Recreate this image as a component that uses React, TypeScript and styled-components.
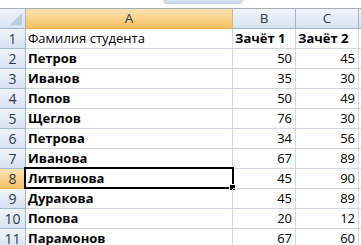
import React from "react";
import styled, { createGlobalStyle, css } from "styled-components";

const Global = createGlobalStyle`
  html, body { margin: 0; padding: 0; background: #fff; }
  body { font-family: "Open Sans", "Liberation Sans", Arial, sans-serif; overflow: hidden; }
`;

const Sheet = styled.div`
  width: 361px;
  height: 245px;
  overflow: hidden;
  background: #fff;
`;

const TopStrip = styled.div`
  height: 8px;
  border-bottom: 1px solid #a5acb5;
  background: #fff;
  display: flex;
  padding-left: 163px;
`;

const ScrollThumb = styled.div`
  width: 80px;
  height: 4px;
  background: linear-gradient(#d3e0f1, #bfd2ea);
  border-radius: 0 0 5px 5px;
`;

const Grid = styled.div`
  display: grid;
  grid-template-columns: 26px 207px 63px 63px 1fr;
  grid-auto-rows: 20px;
`;

const HeadCell = styled.div<{ $active?: boolean }>`
  box-sizing: border-box;
  border-right: 1px solid #9eb6ce;
  border-bottom: 1px solid #9eb6ce;
  background: linear-gradient(#f1f5fb, #e2eaf6 55%, #d6e2f2);
  color: #2a3a4e;
  font-size: 13.5px;
  display: flex;
  align-items: center;
  justify-content: center;
  padding-bottom: 2px;
  position: relative;
  ${(p) =>
    p.$active &&
    css`
      background: linear-gradient(#fbe3b3, #f9d38f 45%, #f5c064);
      border-right-color: #f2b24e;
      border-bottom-color: #f2b24e;
    `}
`;

const CornerTriangle = styled.div`
  position: absolute;
  right: 3px;
  bottom: 3px;
  width: 0;
  height: 0;
  border-left: 12px solid transparent;
  border-bottom: 12px solid #bccbdd;
`;

const RowHead = styled(HeadCell)`
  font-size: 14px;
  padding-bottom: 1px;
`;

const Cell = styled.div<{ $num?: boolean; $bold?: boolean }>`
  box-sizing: border-box;
  border-right: 1px solid #d0d7e5;
  border-bottom: 1px solid #d0d7e5;
  font-size: 13px;
  color: #000;
  display: flex;
  align-items: center;
  padding: 0 3px 2px 2px;
  white-space: nowrap;
  position: relative;
  justify-content: ${(p) => (p.$num ? "flex-end" : "flex-start")};
  font-weight: ${(p) => (p.$bold ? 700 : 400)};
`;

const ActiveFrame = styled.div`
  position: absolute;
  left: -2px;
  top: -2px;
  right: -2px;
  bottom: -1px;
  border: 2px solid #000;
  pointer-events: none;
  &::after {
    content: "";
    position: absolute;
    right: -4px;
    bottom: -4px;
    width: 5px;
    height: 5px;
    background: #000;
    border: 1px solid #fff;
  }
`;

const rows: [string, number, number][] = [
  ["Петров", 50, 45],
  ["Иванов", 35, 30],
  ["Попов", 50, 49],
  ["Щеглов", 76, 30],
  ["Петрова", 34, 56],
  ["Иванова", 67, 89],
  ["Литвинова", 45, 90],
  ["Дуракова", 45, 89],
  ["Попова", 20, 12],
  ["Парамонов", 67, 60],
];

const ACTIVE_ROW = 8;

export default function App() {
  return (
    <Sheet>
      <Global />
      <TopStrip>
        <ScrollThumb />
      </TopStrip>
      <Grid>
        <HeadCell>
          <CornerTriangle />
        </HeadCell>
        <HeadCell $active>A</HeadCell>
        <HeadCell>B</HeadCell>
        <HeadCell>C</HeadCell>
        <HeadCell />

        <RowHead>1</RowHead>
        <Cell>Фамилия студента</Cell>
        <Cell $bold>Зачёт 1</Cell>
        <Cell $bold>Зачёт 2</Cell>
        <Cell />

        {rows.map(([name, a, b], i) => {
          const n = i + 2;
          const active = n === ACTIVE_ROW;
          return (
            <React.Fragment key={n}>
              <RowHead $active={active}>{n}</RowHead>
              <Cell $bold>
                {name}
                {active && <ActiveFrame />}
              </Cell>
              <Cell $num>{a}</Cell>
              <Cell $num>{b}</Cell>
              <Cell />
            </React.Fragment>
          );
        })}
      </Grid>
    </Sheet>
  );
}
